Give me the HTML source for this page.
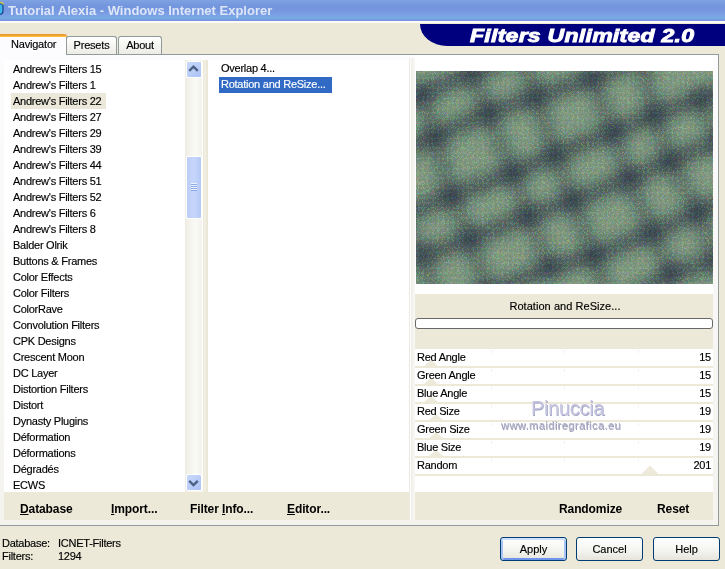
<!DOCTYPE html>
<html><head><meta charset="utf-8">
<style>
*{margin:0;padding:0;box-sizing:border-box}
html,body{width:725px;height:569px;overflow:hidden;background:#ECE9D8;font-family:"Liberation Sans",sans-serif;font-size:11px;color:#000}
.txt,.li,.row,.btn,.tab,#tnav .t,.st{-webkit-text-stroke:0.15px currentColor}
.a{position:absolute}
#title{left:0;top:0;width:725px;height:21px;background:linear-gradient(#7EA2E3 0px,#7496DE 6px,#7596DE 10px,#7DA0E5 15px,#75AAE4 17px,#73A8E2 19px,#7C8FE0 20px,#7C8FE0 21px)}
#title .t{left:8px;top:3px;font-size:13px;font-weight:bold;color:#DCE6F8;white-space:nowrap}
#tline{left:0;top:21px;width:725px;height:2px;background:#FAFBF5}
#banner{left:420px;top:24px;width:305px;height:22px;background:#00007E;border-bottom-left-radius:27px 22px}
#banner .t{left:50px;top:2px;font-size:18px;font-weight:bold;font-style:italic;color:#fff;white-space:nowrap;transform-origin:0 0;transform:scaleX(1.28);-webkit-text-stroke:0.9px #fff;letter-spacing:0.2px}
#panel{left:-2px;top:54px;width:721px;height:472px;border:1px solid #919B9C;background:linear-gradient(#FCFCFE,#F4F3EE)}
.tab{top:36px;height:18px;border:1px solid #919B9C;border-bottom:none;border-radius:3px 3px 0 0;background:linear-gradient(#FFFFFF,#ECEBE5);text-align:center;line-height:16px;letter-spacing:-0.2px}
#tnav{left:-2px;top:34px;width:69px;height:21px;background:#FCFCFE;border:1px solid #919B9C;border-bottom:none;border-radius:3px 3px 0 0;border-top:none}
#tnav .o{left:-1px;top:0;width:69px;height:3px;background:linear-gradient(#E68B2C,#FFC73C);border-radius:3px 3px 0 0}
#tnav .t{left:12px;top:4px;font-size:11px;letter-spacing:-0.2px}
.list{background:#fff}
.li{position:absolute;left:0;height:16px;line-height:16px;white-space:nowrap;letter-spacing:-0.25px}
.btnbar{background:#ECE9D8}
.bb{position:absolute;top:10px;font-size:12px;font-weight:bold;white-space:nowrap;letter-spacing:-0.1px}
.bb u{text-decoration:underline}
.row{position:absolute;left:0;width:298px;height:16px;background:#fff}
.row .n{position:absolute;left:2px;top:0px;line-height:14px;letter-spacing:-0.25px}
.row .v{position:absolute;right:2px;top:0px;line-height:14px;letter-spacing:-0.25px}
.btn{top:537px;height:24px;border:1px solid #003C74;border-radius:3px;background:linear-gradient(#FFFFFF,#F3F3EF 60%,#E6E4DA);text-align:center;line-height:22px;letter-spacing:0px}
</style></head><body>
<div id="title" class="a">
  <svg class="a" style="left:-12px;top:1px" width="16" height="15" viewBox="0 0 16 15"><path d="M1 3 H13 Q15 3 15 5 V10 Q15 13 12 13.5 H1Z" fill="#3CB4EC" stroke="#1A3C8C" stroke-width="1.2"/><path d="M2 1.5 H13 Q15 1.5 15 3.5" stroke="#C8C040" stroke-width="1.6" fill="none"/></svg>
  <div class="a t">Tutorial Alexia - Windows Internet Explorer</div>
</div>
<div id="tline" class="a"></div>
<div id="banner" class="a"><div class="a t">Filters Unlimited 2.0</div></div>

<div id="panel" class="a"></div>
<div class="a tab" style="left:66px;width:51px">Presets</div>
<div class="a tab" style="left:118px;width:44px">About</div>
<div id="tnav" class="a"><div class="a o"></div><div class="a t">Navigator</div></div>

<!-- left list -->
<div class="a list" style="left:4px;top:60px;width:182px;height:432px;overflow:hidden">
</div>
<div id="lefttext" class="a" style="left:13px;top:60.5px;width:170px">
  <div class="li" style="top:0">Andrew's Filters 15</div>
  <div class="li" style="top:16px">Andrew's Filters 1</div>
  <div class="a" style="left:-2px;top:32.5px;width:95px;height:16px;background:#EBE8DA"></div>
  <div class="li" style="top:32px">Andrew's Filters 22</div>
  <div class="li" style="top:48px">Andrew's Filters 27</div>
  <div class="li" style="top:64px">Andrew's Filters 29</div>
  <div class="li" style="top:80px">Andrew's Filters 39</div>
  <div class="li" style="top:96px">Andrew's Filters 44</div>
  <div class="li" style="top:112px">Andrew's Filters 51</div>
  <div class="li" style="top:128px">Andrew's Filters 52</div>
  <div class="li" style="top:144px">Andrew's Filters 6</div>
  <div class="li" style="top:160px">Andrew's Filters 8</div>
  <div class="li" style="top:176px">Balder Olrik</div>
  <div class="li" style="top:192px">Buttons &amp; Frames</div>
  <div class="li" style="top:208px">Color Effects</div>
  <div class="li" style="top:224px">Color Filters</div>
  <div class="li" style="top:240px">ColorRave</div>
  <div class="li" style="top:256px">Convolution Filters</div>
  <div class="li" style="top:272px">CPK Designs</div>
  <div class="li" style="top:288px">Crescent Moon</div>
  <div class="li" style="top:304px">DC Layer</div>
  <div class="li" style="top:320px">Distortion Filters</div>
  <div class="li" style="top:336px">Distort</div>
  <div class="li" style="top:352px">Dynasty Plugins</div>
  <div class="li" style="top:368px">Déformation</div>
  <div class="li" style="top:384px">Déformations</div>
  <div class="li" style="top:400px">Dégradés</div>
  <div class="li" style="top:416px">ECWS</div>
</div>
<!-- scrollbar -->
<div class="a" style="left:185px;top:60px;width:17px;height:432px;background:linear-gradient(90deg,#EFEDE4,#FAFAF6 60%,#F3F2EC)"></div>
<div class="a" style="left:186px;top:61px;width:16px;height:17px;border:1px solid #fff;border-radius:2px;background:linear-gradient(135deg,#C8D8FA,#B8CCF8 60%,#A9C1F4)"></div>
<svg class="a" style="left:186px;top:61px" width="16" height="17"><path d="M3.2 9.8 L7.5 5.6 L11.8 9.8" stroke="#4D6185" stroke-width="2.4" fill="none"/></svg>
<div class="a" style="left:186px;top:156px;width:16px;height:63px;border:1px solid #fff;border-radius:2px;background:linear-gradient(90deg,#BCCDF7,#C7D6FB 50%,#B4C8F6)"></div>
<div class="a" style="left:191px;top:183px;width:6px;height:8px;background:repeating-linear-gradient(#EEF4FE 0 1px,#8CA7E8 1px 2px)"></div>
<div class="a" style="left:186px;top:474px;width:16px;height:17px;border:1px solid #fff;border-radius:2px;background:linear-gradient(135deg,#C8D8FA,#B8CCF8 60%,#A9C1F4)"></div>
<svg class="a" style="left:186px;top:475px" width="16" height="17"><path d="M3.2 5.8 L7.5 10 L11.8 5.8" stroke="#4D6185" stroke-width="2.4" fill="none"/></svg>
<!-- separators -->
<div class="a" style="left:202px;top:60px;width:6px;height:432px;background:linear-gradient(90deg,#FFFFFF 0 1px,#ECE9DA 1px 2px,#F1EFE3 2px 4px,#EAE7D6 4px 6px)"></div>

<!-- middle list -->
<div class="a list" style="left:208px;top:60px;width:201px;height:432px"></div>
<div class="a li" style="left:221px;top:60px">Overlap 4...</div>
<div class="a" style="left:219px;top:77px;width:113px;height:16px;background:#316AC5"></div>
<div class="a li" style="left:221px;top:76px;color:#fff">Rotation and ReSize...</div>

<div class="a" style="left:409px;top:58px;width:6px;height:462px;background:linear-gradient(90deg,#ECEAE2 0 1px,#FDFDFB 1px 2px,#F2F0EA 2px 4px,#F8F7F3 4px 6px)"></div>

<!-- right pane -->
<div class="a" style="left:415px;top:55px;width:298px;height:239px;background:#fff"></div>
<div id="preview" class="a" style="left:416px;top:71px;width:297px;height:213px;background:#93A893;overflow:hidden"><svg width="297" height="213" viewBox="0 0 297 213" style="position:absolute;left:0;top:0"><defs><filter id="bl" x="-30%" y="-30%" width="160%" height="160%"><feGaussianBlur stdDeviation="8.0"/></filter><filter id="nz" x="0" y="0" width="100%" height="100%"><feTurbulence type="turbulence" baseFrequency="1.2" numOctaves="1" seed="7"/><feColorMatrix type="matrix" values="1.6 0 0 0 -0.3  0 1.6 0 0 -0.3  0 0 1.6 0 -0.3  0 0 0 0 1"/></filter></defs><rect width="297" height="213" fill="#93A893"/><g filter="url(#bl)" fill="none" stroke="#1E2E46" stroke-linecap="round"><path d="M-44 43 L6 23 L56 2 L106 -18 M-31 86 L19 66 L72 42 L120 26 L176 7 L226 -13 M-15 145 L35 125 L97 102 L139 84 L197 61 L238 44 L284 28 L334 8 M6 185 L54 168 L112 145 L157 130 L213 108 L254 90 L304 70 M24 239 L72 222 L134 197 L178 185 L236 162 L282 141 L332 121 M196 239 L255 203 L300 190" stroke-width="9.0" opacity="0.8"/><path d="M-44 43 L-31 86 M6 23 L19 66 M56 2 L72 42 M106 -18 L120 26 M-31 86 L-15 145 M19 66 L35 125 M72 42 L97 102 M120 26 L139 84 M176 7 L197 61 M226 -13 L238 44 M-15 145 L6 185 M35 125 L54 168 M97 102 L112 145 M139 84 L157 130 M197 61 L213 108 M238 44 L254 90 M284 28 L304 70 M6 185 L24 239 M54 168 L72 222 M112 145 L134 197 M157 130 L178 185 M213 108 L236 162 M254 90 L282 141 M304 70 L332 121 M178 185 L196 239 M236 162 L255 203 M282 141 L300 190" stroke-width="6.0" opacity="0.7"/><g fill="#1E2E46" stroke="none"><circle cx="-44" cy="43" r="9.0"/><circle cx="6" cy="23" r="9.0"/><circle cx="56" cy="2" r="9.0"/><circle cx="106" cy="-18" r="9.0"/><circle cx="-31" cy="86" r="9.0"/><circle cx="19" cy="66" r="9.0"/><circle cx="72" cy="42" r="9.0"/><circle cx="120" cy="26" r="9.0"/><circle cx="176" cy="7" r="9.0"/><circle cx="226" cy="-13" r="9.0"/><circle cx="-15" cy="145" r="9.0"/><circle cx="35" cy="125" r="9.0"/><circle cx="97" cy="102" r="9.0"/><circle cx="139" cy="84" r="9.0"/><circle cx="197" cy="61" r="9.0"/><circle cx="238" cy="44" r="9.0"/><circle cx="284" cy="28" r="9.0"/><circle cx="334" cy="8" r="9.0"/><circle cx="6" cy="185" r="9.0"/><circle cx="54" cy="168" r="9.0"/><circle cx="112" cy="145" r="9.0"/><circle cx="157" cy="130" r="9.0"/><circle cx="213" cy="108" r="9.0"/><circle cx="254" cy="90" r="9.0"/><circle cx="304" cy="70" r="9.0"/><circle cx="24" cy="239" r="9.0"/><circle cx="72" cy="222" r="9.0"/><circle cx="134" cy="197" r="9.0"/><circle cx="178" cy="185" r="9.0"/><circle cx="236" cy="162" r="9.0"/><circle cx="282" cy="141" r="9.0"/><circle cx="332" cy="121" r="9.0"/><circle cx="196" cy="239" r="9.0"/><circle cx="255" cy="203" r="9.0"/><circle cx="300" cy="190" r="9.0"/></g></g><rect width="297" height="213" filter="url(#nz)" opacity="0.25" style="mix-blend-mode:overlay"/></svg></div>
<div class="a" style="left:415px;top:294px;width:298px;height:55px;background:#ECE9D8"></div>
<div class="a st" style="left:416px;top:299px;width:298px;text-align:center;letter-spacing:0.05px;line-height:14px">Rotation and ReSize...</div>
<div class="a" style="left:415px;top:318px;width:298px;height:11px;border:1px solid #686868;border-radius:3px;background:#fff"></div>
<div class="a" style="left:415px;top:349px;width:298px;height:127px;background:#ECE9D8">
  <div class="row" style="top:0;height:17px"><span class="n" style="top:1px">Red Angle</span><span class="v" style="top:1px">15</span></div>
  <div class="row" style="top:19px"><span class="n">Green Angle</span><span class="v">15</span></div>
  <div class="row" style="top:37px"><span class="n">Blue Angle</span><span class="v">15</span></div>
  <div class="row" style="top:55px"><span class="n">Red Size</span><span class="v">19</span></div>
  <div class="row" style="top:73px"><span class="n">Green Size</span><span class="v">19</span></div>
  <div class="row" style="top:91px"><span class="n">Blue Size</span><span class="v">19</span></div>
  <div class="row" style="top:109px"><span class="n">Random</span><span class="v">201</span></div>
</div>
<svg class="a" style="left:415px;top:349px;mix-blend-mode:multiply" width="298" height="127" fill="#EEEADB"><polygon points="9,17 16,11 23,17"/><polygon points="9,35 16,29 23,35"/><polygon points="9,53 16,47 23,53"/><polygon points="14,71 21,65 28,71"/><polygon points="14,89 21,83 28,89"/><polygon points="14,107 21,101 28,107"/><polygon points="226.5,125 235,116.5 243.5,125"/><g fill="#F0F0F0"><rect x="76" y="1" width="1" height="3"/><rect x="149" y="1" width="1" height="3"/><rect x="223" y="1" width="1" height="3"/><rect x="76" y="20" width="1" height="3"/><rect x="149" y="20" width="1" height="3"/><rect x="223" y="20" width="1" height="3"/><rect x="76" y="38" width="1" height="3"/><rect x="149" y="38" width="1" height="3"/><rect x="223" y="38" width="1" height="3"/><rect x="76" y="56" width="1" height="3"/><rect x="149" y="56" width="1" height="3"/><rect x="223" y="56" width="1" height="3"/><rect x="76" y="74" width="1" height="3"/><rect x="149" y="74" width="1" height="3"/><rect x="223" y="74" width="1" height="3"/><rect x="76" y="92" width="1" height="3"/><rect x="149" y="92" width="1" height="3"/><rect x="223" y="92" width="1" height="3"/><rect x="76" y="110" width="1" height="3"/><rect x="149" y="110" width="1" height="3"/><rect x="223" y="110" width="1" height="3"/></g></svg>
<div class="a" style="left:415px;top:476px;width:298px;height:16px;background:#fff"></div>

<!-- watermark -->
<div class="a" style="left:531px;top:397px;font-size:20px;color:#C6C6E2;white-space:nowrap;text-shadow:0.6px 0.6px 0 #A2A2C2;letter-spacing:-0.3px">Pinuccia</div>
<div class="a" style="left:501px;top:419px;font-size:11px;color:#AEAEC8;white-space:nowrap;text-shadow:0.5px 0.5px 0 #9696B2;letter-spacing:0.45px">www.maidiregrafica.eu</div>
<!-- bottom button bars -->
<div class="a btnbar" style="left:4px;top:492px;width:405px;height:28px">
  <div class="bb" style="left:16px"><u>D</u>atabase</div>
  <div class="bb" style="left:107px"><u>I</u>mport...</div>
  <div class="bb" style="left:186px">Filter <u>I</u>nfo...</div>
  <div class="bb" style="left:283px"><u>E</u>ditor...</div>
</div>
<div class="a btnbar" style="left:415px;top:492px;width:298px;height:28px">
  <div class="bb" style="left:144px">Randomize</div>
  <div class="bb" style="left:242px">Reset</div>
</div>

<!-- status -->
<div class="a st" style="left:2px;top:537px;line-height:13px;letter-spacing:-0.25px">Database:<br>Filters:</div>
<div class="a st" style="left:58px;top:537px;line-height:13px;letter-spacing:-0.25px">ICNET-Filters<br>1294</div>

<div class="a btn" style="left:500px;width:67px;box-shadow:inset 0 2px 0 #CEE2FB,inset 2px 0 0 #A8C4F4,inset -2px 0 0 #A8C4F4,inset 0 -2px 0 #6E94EC">Apply</div>
<div class="a btn" style="left:576px;width:67px">Cancel</div>
<div class="a btn" style="left:653px;width:67px">Help</div>
</body></html>
